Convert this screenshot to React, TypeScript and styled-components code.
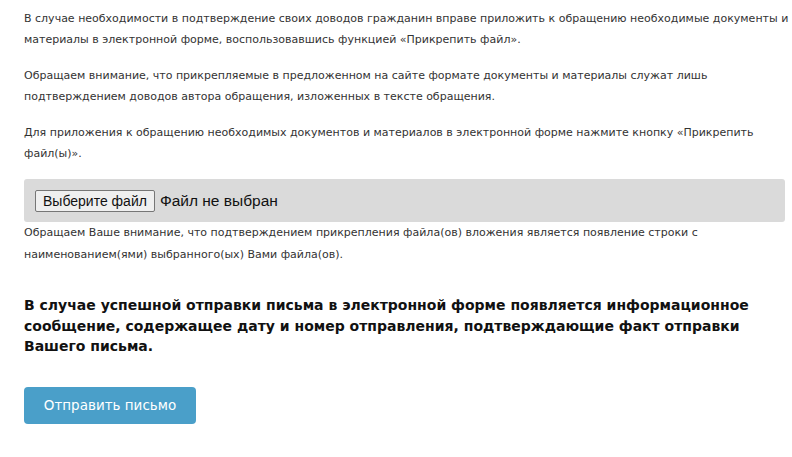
import { FC } from 'react';
import { createGlobalStyle, styled } from 'styled-components';

const GlobalStyle = createGlobalStyle`
  html, body {
    margin: 0;
    padding: 0;
    background: #ffffff;
  }
`;

const App: FC = () => {
  return (
    <>
      <GlobalStyle />
      <Page>
        <Text>
          В случае необходимости в подтверждение своих доводов гражданин вправе приложить к обращению необходимые документы и
          материалы в электронной форме, воспользовавшись функцией «Прикрепить файл».
        </Text>
        <Text>
          Обращаем внимание, что прикрепляемые в предложенном на сайте формате документы и материалы служат лишь
          подтверждением доводов автора обращения, изложенных в тексте обращения.
        </Text>
        <Text>
          Для приложения к обращению необходимых документов и материалов в электронной форме нажмите кнопку «Прикрепить
          файл(ы)».
        </Text>

        <FileBox>
          <FileButton type="button">Выберите файл</FileButton>
          <FileName>Файл не выбран</FileName>
        </FileBox>

        <Note>
          Обращаем Ваше внимание, что подтверждением прикрепления файла(ов) вложения является появление строки с
          наименованием(ями) выбранного(ых) Вами файла(ов).
        </Note>

        <Notice>
          В случае успешной отправки письма в электронной форме появляется информационное сообщение, содержащее дату и номер
          отправления, подтверждающие факт отправки Вашего письма.
        </Notice>

        <SendButton type="button">Отправить письмо</SendButton>
      </Page>
    </>
  );
};

export default App;

const Page = styled.div`
  width: 768px;
  padding: 8px 0 0 24px;
  font-family: 'DejaVu Sans', Verdana, sans-serif;
  color: #333333;
`;

const Text = styled.p`
  margin: 0 0 15px;
  font-size: 11px;
  line-height: 21px;
`;

const FileBox = styled.div`
  display: flex;
  align-items: center;
  gap: 5px;
  height: 43px;
  box-sizing: border-box;
  padding: 0 11px;
  width: 761px;
  background: #dadada;
  border-radius: 3px;
`;

const FileButton = styled.button`
  height: 22px;
  padding: 0 7px;
  font-family: 'Liberation Sans', Arial, sans-serif;
  font-size: 14px;
  color: #111111;
  background: #efefef;
  border: 1px solid #767676;
  border-radius: 2px;
`;

const FileName = styled.span`
  font-family: 'Liberation Sans', Arial, sans-serif;
  font-size: 15.5px;
  color: #111111;
`;

const Note = styled.p`
  margin: 0;
  font-size: 11px;
  line-height: 22px;
`;

const Notice = styled.p`
  margin: 29px 0 0;
  font-size: 14px;
  line-height: 20.5px;
  font-weight: 700;
  color: #111111;
`;

const SendButton = styled.button`
  margin-top: 30px;
  width: 172px;
  height: 37px;
  font-family: 'DejaVu Sans', Tahoma, sans-serif;
  font-size: 13.5px;
  color: #ffffff;
  background: #4a9fc9;
  border: none;
  border-radius: 4px;
`;
